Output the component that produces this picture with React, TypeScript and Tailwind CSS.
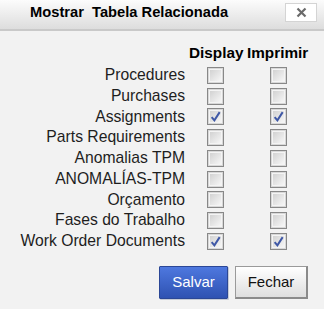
import React from 'react'

const rows: { label: string; display: boolean; print: boolean }[] = [
  { label: 'Procedures', display: false, print: false },
  { label: 'Purchases', display: false, print: false },
  { label: 'Assignments', display: true, print: true },
  { label: 'Parts Requirements', display: false, print: false },
  { label: 'Anomalias TPM', display: false, print: false },
  { label: 'ANOMALÍAS-TPM', display: false, print: false },
  { label: 'Orçamento', display: false, print: false },
  { label: 'Fases do Trabalho', display: false, print: false },
  { label: 'Work Order Documents', display: true, print: true },
]

function Box({ checked }: { checked: boolean }) {
  return (
    <div className="w-[17px] h-[17px] border border-[#888] bg-[#d8d8d8] p-[1px]">
      <div className="w-full h-full border border-[#f4f4f4] bg-gradient-to-br from-[#d2d2d2] to-[#f6f6f6] flex items-center justify-center">
        {checked && (
          <svg width="11" height="11" viewBox="0 0 10 10">
            <path d="M1.5 5.5 L4 8.5 L8.8 1" fill="none" stroke="#3f58a6" strokeWidth="1.8" />
          </svg>
        )}
      </div>
    </div>
  )
}

export default function App() {
  return (
    <div className="w-[324px] h-[309px] bg-[#f2f2f2] font-['Liberation_Sans',Arial,sans-serif] text-[#1e1e1e]">
      {/* Title bar */}
      <div className="h-[31px] border-b-2 border-[#c9c9c9] bg-gradient-to-b from-[#fcfcfc] to-[#dddddd] flex items-center pl-[30px] pr-[7px]">
        <span className="text-[14.7px] font-bold text-black -mt-[5px]">Mostrar&nbsp; Tabela Relacionada</span>
        <button className="ml-auto -mt-[5px] w-[32px] h-[19px] bg-white border border-[#d4d4d4] flex items-center justify-center">
          <svg width="11" height="11" viewBox="0 0 11 11">
            <path d="M1.5 1.5 L9.5 9.5 M9.5 1.5 L1.5 9.5" stroke="#6a6a6a" strokeWidth="2.2" />
          </svg>
        </button>
      </div>

      {/* Table */}
      <div className="grid grid-cols-[1fr_60px_64px] pr-[13px] pt-[13px]">
        <div />
        <div className="text-[15.3px] font-bold text-black text-left pl-[2px] leading-[18px] mb-[3px]">Display</div>
        <div className="text-[15.3px] font-bold text-black text-left leading-[18px]">Imprimir</div>
        {rows.map((r) => (
          <React.Fragment key={r.label}>
            <div className="h-[20.75px] text-[15.7px] leading-[20.75px] text-right pr-[2px] whitespace-nowrap">{r.label}</div>
            <div className="h-[20.75px] flex items-center justify-center pr-[3px]">
              <Box checked={r.display} />
            </div>
            <div className="h-[20.75px] flex items-center justify-center pr-[2px]">
              <Box checked={r.print} />
            </div>
          </React.Fragment>
        ))}
      </div>

      {/* Buttons */}
      <div className="flex justify-end gap-[7px] pr-[16px] mt-[14px]">
        <button className="w-[69px] h-[33px] border border-[#2b4796] bg-gradient-to-b from-[#4e78df] to-[#2f52b2] text-white text-[15px] rounded-[1px] shadow-[1px_1px_0_#c6cbd6]">
          Salvar
        </button>
        <button className="w-[73px] h-[33px] border border-[#9a9a9a] border-r-[2px] border-b-[2px] border-r-[#8a8a8a] border-b-[#8a8a8a] bg-gradient-to-b from-white to-[#dedede] text-[#111] text-[15px]">
          Fechar
        </button>
      </div>
    </div>
  )
}
